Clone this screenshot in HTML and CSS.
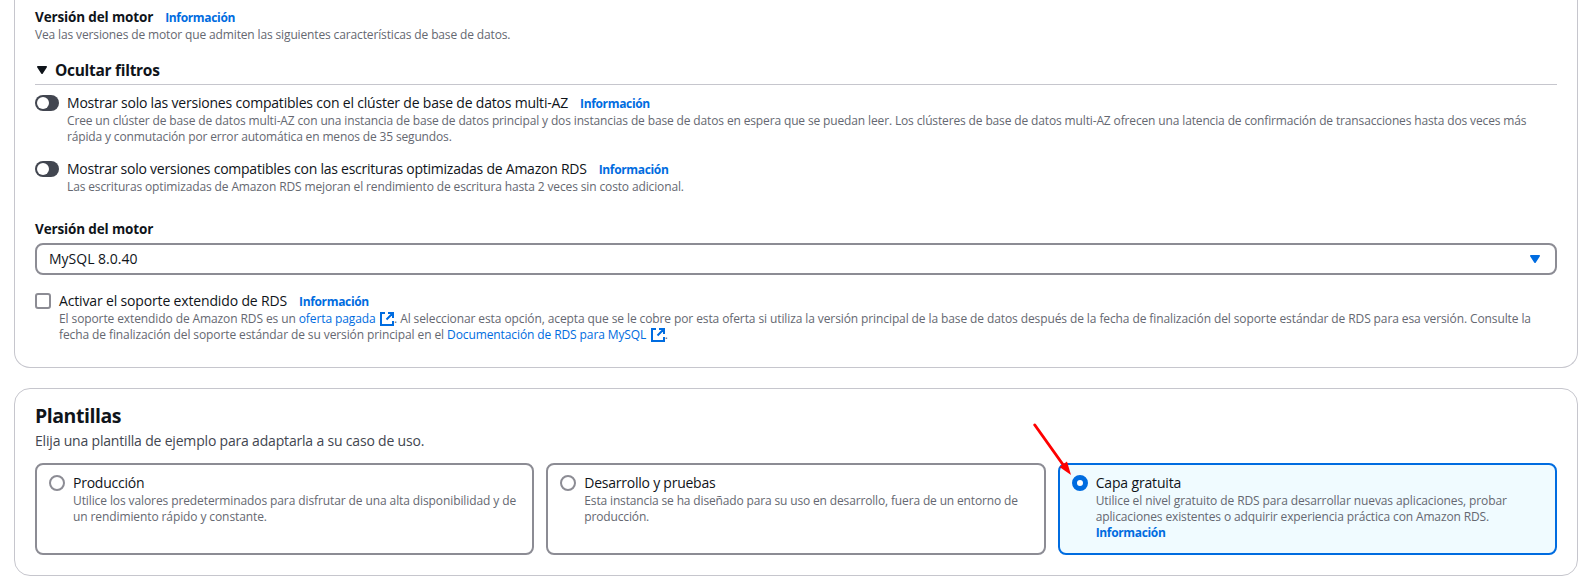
FILE: index.html
```
<!DOCTYPE html>
<html lang="es">
<head>
<meta charset="utf-8">
<title>Crear base de datos</title>
<link rel="stylesheet" href="styles.css">
</head>
<body>
<main class="page">
  <section class="card engine">
    <div class="title"><span class="label">Versión del motor</span><a class="info">Información</a></div>
    <p class="desc intro">Vea las versiones de motor que admiten las siguientes características de base de datos.</p>

    <div class="expander">
      <svg class="caret" width="10" height="8" viewBox="0 0 10 8"><path d="M.8.8h8.4L5 7.2z" fill="currentColor" stroke="currentColor" stroke-width="1.6" stroke-linejoin="round"/></svg>
      <span>Ocultar filtros</span>
    </div>

    <div class="option first">
      <span class="toggle"><span class="knob"></span></span>
      <div class="body">
        <div class="title">Mostrar solo las versiones compatibles con el clúster de base de datos multi-AZ<a class="info">Información</a></div>
        <p class="desc">Cree un clúster de base de datos multi-AZ con una instancia de base de datos principal y dos instancias de base de datos en espera que se puedan leer. Los clústeres de base de datos multi-AZ ofrecen una latencia de confirmación de transacciones hasta dos veces más<br><span class="tight">rápida y conmutación por error automática en menos de 35 segundos.</span></p>
      </div>
    </div>

    <div class="option second">
      <span class="toggle"><span class="knob"></span></span>
      <div class="body">
        <div class="title"><span class="narrow">Mostrar solo versiones compatibles con las escrituras optimizadas de Amazon RDS</span><a class="info">Información</a></div>
        <p class="desc base">Las escrituras optimizadas de Amazon RDS mejoran el rendimiento de escritura hasta 2 veces sin costo adicional.</p>
      </div>
    </div>

    <div class="title field-label"><span class="label">Versión del motor</span></div>
    <div class="select">
      <span>MySQL 8.0.40</span>
      <svg class="caret" width="10" height="8" viewBox="0 0 10 8"><path d="M.8.8h8.4L5 7.2z" fill="currentColor" stroke="currentColor" stroke-width="1.6" stroke-linejoin="round"/></svg>
    </div>

    <div class="option support">
      <span class="checkbox"></span>
      <div class="body">
        <div class="title"><span class="wide">Activar el soporte extendido de RDS</span><a class="info">Información</a></div>
        <p class="desc loose">El soporte extendido de Amazon RDS es un <a class="link">oferta pagada <svg class="ext" width="14" height="14" viewBox="0 0 14 14"><path d="M5 1H1v12h12V9M8 1h5v5M13 1 6.5 7.5" fill="none" stroke="currentColor" stroke-width="2"/></svg></a>. Al seleccionar esta opción, acepta que se le cobre por esta oferta si utiliza la versión principal de la base de datos después de la fecha de finalización del soporte estándar de RDS para esa versión. Consulte la<br>fecha de finalización del soporte estándar de su versión principal en el <a class="link">Documentación de RDS para MySQL <svg class="ext" width="14" height="14" viewBox="0 0 14 14"><path d="M5 1H1v12h12V9M8 1h5v5M13 1 6.5 7.5" fill="none" stroke="currentColor" stroke-width="2"/></svg></a>.</p>
      </div>
    </div>
  </section>

  <section class="card templates">
    <h2>Plantillas</h2>
    <p class="subtitle">Elija una plantilla de ejemplo para adaptarla a su caso de uso.</p>
    <div class="tiles">
      <div class="tile">
        <span class="radio"></span>
        <div class="body">
          <div class="title narrow">Producción</div>
          <p class="desc loose">Utilice los valores predeterminados para disfrutar de una alta disponibilidad y de<br>un rendimiento rápido y constante.</p>
        </div>
      </div>
      <div class="tile">
        <span class="radio"></span>
        <div class="body">
          <div class="title narrow">Desarrollo y pruebas</div>
          <p class="desc tight">Esta instancia se ha diseñado para su uso en desarrollo, fuera de un entorno de<br>producción.</p>
        </div>
      </div>
      <div class="tile selected">
        <span class="radio"></span>
        <div class="body">
          <div class="title wide">Capa gratuita</div>
          <p class="desc loose">Utilice el nivel gratuito de RDS para desarrollar nuevas aplicaciones, probar<br><span class="base">aplicaciones existentes o adquirir experiencia práctica con Amazon RDS.</span><br><a class="info">Información</a></p>
        </div>
        <svg class="arrow" width="40" height="54" viewBox="0 0 40 54"><path d="M1.8 2 31 43" stroke="#fe0000" stroke-width="2.9" stroke-linecap="round"/><path d="M38 52 26.5 44 34 38.5z" fill="#fe0000"/></svg>
      </div>
    </div>
  </section>
</main>
</body>
</html>
```

FILE: styles.css
```
* { box-sizing: border-box; }
body {
  margin: 0;
  background: #fff;
  color: #0f141a;
  font: 14px/20px "Open Sans", "Noto Sans", sans-serif;
  overflow: hidden;
}
p, h2 { margin: 0; }
.page {
  display: flex;
  flex-direction: column;
  gap: 20px;
  padding: 0 14px 8px;
}
.card {
  border: 1px solid #c6c6cd;
  border-radius: 16px;
  padding: 0 20px;
}
.engine {
  height: 368px;
  border-top: 0;
  border-radius: 0 0 16px 16px;
  padding-top: 7px;
}
.title {
  height: 20px;
  white-space: nowrap;
  letter-spacing: -0.2px;
}
.label {
  font-weight: 700;
  font-size: 13.5px;
  letter-spacing: -0.14px;
}
.narrow { letter-spacing: -0.24px; }
.wide { letter-spacing: -0.155px; }
.info {
  margin-left: 12px;
  color: #006ce0;
  font-size: 12px;
  font-weight: 700;
  letter-spacing: -0.34px;
}
.desc {
  color: #656871;
  font-size: 12px;
  line-height: 16px;
  white-space: nowrap;
  letter-spacing: -0.139px;
}
.desc .info { margin-left: 0; }
.tight { letter-spacing: -0.15px; }
.loose { letter-spacing: -0.102px; }
.base { letter-spacing: -0.13px; }
.expander {
  display: flex;
  align-items: center;
  gap: 8px;
  height: 28px;
  margin-top: 14px;
  padding: 0 0 1px 2px;
  border-bottom: 1px solid #c6c6cd;
  font-size: 15.5px;
  font-weight: 700;
  letter-spacing: -0.29px;
}
.caret { display: block; }
.option { display: flex; gap: 8px; }
.first { margin-top: 8px; }
.second { margin-top: 14px; }
.toggle {
  width: 24px;
  height: 16px;
  margin-top: 2px;
  padding: 2px;
  border-radius: 8px;
  background: #424650;
}
.knob {
  display: block;
  width: 12px;
  height: 12px;
  border-radius: 50%;
  background: #fff;
}
.field-label { margin-top: 24px; }
.select {
  display: flex;
  align-items: center;
  justify-content: space-between;
  height: 32px;
  margin-top: 4px;
  padding: 0 15px 0 12px;
  border: 2px solid #8c8c94;
  border-radius: 8px;
}
.select .caret { color: #006ce0; }
.support { margin-top: 16px; }
.checkbox {
  width: 16px;
  height: 16px;
  margin-top: 2px;
  border: 2px solid #8c8c94;
  border-radius: 3px;
}
.link { color: #006ce0; }
.ext { margin-left: 1.5px; vertical-align: -3px; }
.templates {
  height: 188px;
  padding-top: 15px;
}
h2 {
  font-size: 19.5px;
  line-height: 24px;
  letter-spacing: -0.46px;
}
.subtitle {
  margin-top: 3px;
  color: #424650;
  letter-spacing: -0.185px;
}
.tiles {
  display: grid;
  grid-template-columns: repeat(3, 1fr);
  gap: 12px;
  margin-top: 12px;
}
.tile {
  position: relative;
  display: flex;
  gap: 8px;
  height: 92px;
  padding: 8px 12px;
  border: 2px solid #8c8c94;
  border-radius: 8px;
}
.selected { border-color: #006ce0; background: #f0fbff; }
.radio {
  width: 16px;
  height: 16px;
  margin-top: 2px;
  border: 2px solid #8c8c94;
  border-radius: 50%;
  background: #fff;
}
.selected .radio { border: 5px solid #006ce0; }
.arrow {
  position: absolute;
  left: -27px;
  top: -42px;
}
```
